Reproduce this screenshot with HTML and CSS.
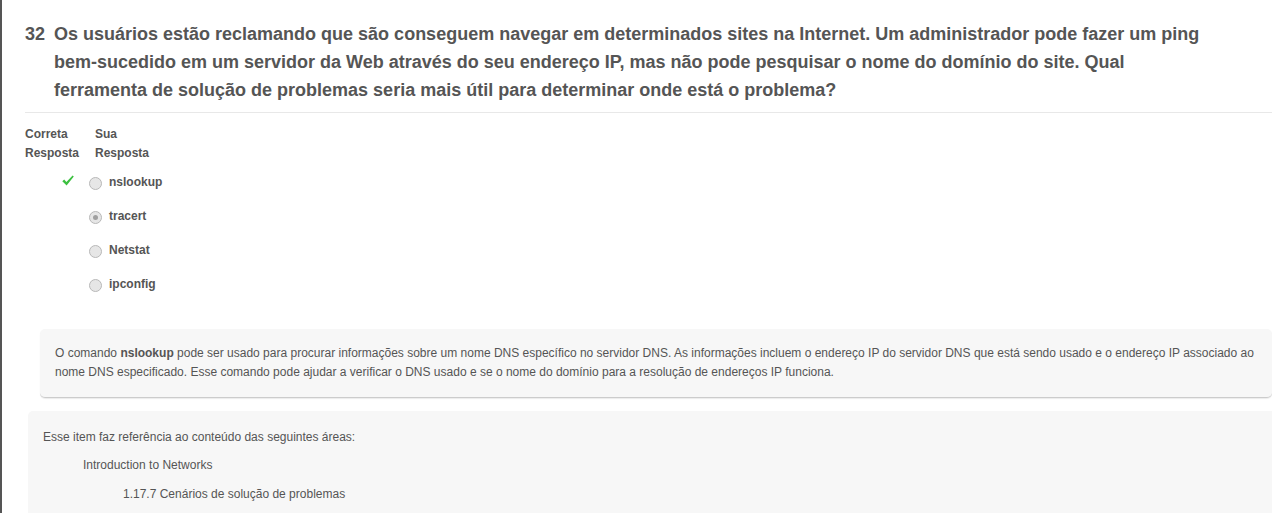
FILE: index.html
```html
<!DOCTYPE html>
<html lang="pt">
<head>
<meta charset="utf-8">
<link rel="stylesheet" href="styles.css">
</head>
<body>
<div class="page">
  <div class="question">
    <span class="qnum">32</span>
    <span class="qtext">Os usuários estão reclamando que são conseguem navegar em determinados sites na Internet. Um administrador pode fazer um ping bem-sucedido em um servidor da Web através do seu endereço IP, mas não pode pesquisar o nome do domínio do site. Qual ferramenta de solução de problemas seria mais útil para determinar onde está o problema?</span>
  </div>
  <div class="answers">
    <div class="heads">
      <div class="head col1">Correta<br>Resposta</div>
      <div class="head col2">Sua<br>Resposta</div>
    </div>
    <div class="opt">
      <span class="mark"><svg width="12" height="11" viewBox="0 0 12 11"><path d="M0.3 6.2 L2.2 4.6 L4.4 7 L10.6 0.4 L11.8 1.6 L4.6 10.6 Z" fill="#3cc040"/></svg></span>
      <span class="radio"></span><span class="label">nslookup</span>
    </div>
    <div class="opt">
      <span class="mark"></span>
      <span class="radio checked"></span><span class="label">tracert</span>
    </div>
    <div class="opt">
      <span class="mark"></span>
      <span class="radio"></span><span class="label">Netstat</span>
    </div>
    <div class="opt">
      <span class="mark"></span>
      <span class="radio"></span><span class="label">ipconfig</span>
    </div>
  </div>
  <div class="feedback">
    O comando <b>nslookup</b> pode ser usado para procurar informações sobre um nome DNS específico no servidor DNS. As informações incluem o endereço IP do servidor DNS que está sendo usado e o endereço IP associado ao nome DNS especificado. Esse comando pode ajudar a verificar o DNS usado e se o nome do domínio para a resolução de endereços IP funciona.
  </div>
  <div class="refs">
    <p class="ref0">Esse item faz referência ao conteúdo das seguintes áreas:</p>
    <p class="ref1">Introduction to Networks</p>
    <p class="ref2">1.17.7 Cenários de solução de problemas</p>
  </div>
</div>
</body>
</html>
```
FILE: styles.css
```css
html, body {
  margin: 0;
  padding: 0;
  background: #fff;
  height: 100%;
  overflow: hidden;
}
body {
  font-family: "Liberation Sans", Arial, sans-serif;
  color: #555;
  border-left: 2px solid #555;
  box-sizing: border-box;
}
.page {
  padding-top: 20px;
}
.question {
  display: flex;
  margin-left: 23px;
  padding-bottom: 8px;
  border-bottom: 1px solid #e8e8e8;
  font-size: 18px;
  font-weight: bold;
  line-height: 28px;
  color: #555;
}
.qnum {
  flex: 0 0 29px;
}
.qtext {
  flex: 1;
  padding-right: 60px;
}
.answers {
  margin-left: 23px;
  padding-top: 12px;
}
.heads {
  display: flex;
  font-size: 12px;
  font-weight: bold;
  line-height: 19px;
  color: #555;
  margin-bottom: 2px;
}
.col1 { width: 70px; }
.col2 { width: 70px; }
.opt {
  display: flex;
  align-items: center;
  height: 34px;
  font-size: 12px;
  font-weight: bold;
}
.mark {
  width: 63px;
  display: flex;
  justify-content: flex-end;
  padding-right: 14px;
  box-sizing: border-box;
  margin-top: -4px;
}
.radio {
  width: 11px;
  height: 11px;
  border-radius: 50%;
  border: 1px solid #b8b8b8;
  background: #e6e6e6;
  margin-left: 1px;
  margin-right: 7px;
  position: relative;
  margin-top: 3px;
}
.radio.checked::after {
  content: "";
  position: absolute;
  left: 3px;
  top: 3px;
  width: 5px;
  height: 5px;
  border-radius: 50%;
  background: #a0a0a0;
}
.feedback {
  margin: 28px 0 0 38px;
  background: #f7f7f7;
  border-radius: 5px;
  border-bottom: 1px solid #ccc;
  box-shadow: 0 1px 1px rgba(0,0,0,0.08);
  padding: 15px 14px 15px 15px;
  font-size: 12px;
  line-height: 19px;
  color: #555;
}
.refs {
  margin: 13px 0 0 26px;
  background: #f7f7f7;
  border-radius: 5px 0 0 0;
  padding: 19px 15px 20px 15px;
  font-size: 12px;
  color: #555;
}
.refs p {
  margin: 0;
  line-height: 14px;
}
.ref1 { margin-top: 14px !important; padding-left: 40px; }
.ref2 { margin-top: 15px !important; padding-left: 80px; }
```
